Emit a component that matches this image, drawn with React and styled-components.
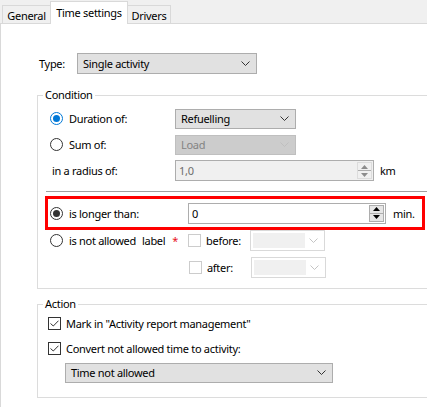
import React from "react"
import styled, { createGlobalStyle, css } from "styled-components"

const GlobalStyle = createGlobalStyle`
  html, body {
    margin: 0;
    padding: 0;
    background: #ffffff;
  }
  body {
    font-family: "Noto Sans", "Open Sans", sans-serif;
    font-size: 11px;
    letter-spacing: -0.3px;
    color: #000;
  }
`

const Window = styled.div`
  width: 427px;
  height: 407px;
  overflow: hidden;
  display: flex;
  flex-direction: column;
  background: #f0f0f0;
`

const TabBar = styled.div`
  height: 23px;
  display: flex;
  align-items: flex-end;
  padding-left: 2px;
  border-bottom: 1px solid #d9d9d9;
  flex-shrink: 0;
`

const Tab = styled.div`
  height: 18px;
  width: ${(p) => p.$w}px;
  box-sizing: border-box;
  display: flex;
  align-items: center;
  justify-content: center;
  border: 1px solid #d9d9d9;
  border-bottom: none;
  background: #f0f0f0;
  margin-right: -1px;
  padding-top: 1px;
  ${(p) =>
    p.$active &&
    css`
      height: 23px;
      background: #fff;
      margin-bottom: -1px;
      position: relative;
      z-index: 1;
      align-items: flex-start;
      padding-top: 3px;
    `}
`

const Panel = styled.div`
  flex: 1;
  background: #fff;
  border-left: 1px solid #d9d9d9;
  padding: 29px 0 0 36px;
  display: flex;
  flex-direction: column;
`

const TypeRow = styled.div`
  display: flex;
  align-items: center;
  height: 21px;
  padding-left: 2px;
`

const TypeLabel = styled.span`
  width: 38px;
`

const Group = styled.fieldset`
  margin: ${(p) => p.$top || 0}px -20px 0 0;
  padding: 0;
  border: 1px solid #dcdcdc;
  min-width: 0;
  height: ${(p) => p.$height}px;
  box-sizing: border-box;
`

const Legend = styled.legend`
  margin-left: 5px;
  padding: 0 2px;
  line-height: 14px;
`

const Rows = styled.div`
  display: flex;
  flex-direction: column;
  padding: ${(p) => p.$pad || "0"};
`

const Row = styled.div`
  display: flex;
  align-items: center;
  height: ${(p) => p.$h || 21}px;
  margin-top: ${(p) => p.$mt || 0}px;
  white-space: nowrap;
`

const Choice = styled.label`
  display: flex;
  align-items: center;
  gap: 6px;
  width: ${(p) => p.$w}px;
  flex-shrink: 0;
  white-space: nowrap;
`

const Radio = styled.span`
  width: 13px;
  height: 13px;
  box-sizing: border-box;
  border-radius: 50%;
  border: 1px solid ${(p) => (p.$color ? p.$color : "#333")};
  display: flex;
  align-items: center;
  justify-content: center;
  flex-shrink: 0;
  &::after {
    content: "";
    display: ${(p) => (p.$checked ? "block" : "none")};
    width: 7px;
    height: 7px;
    border-radius: 50%;
    background: ${(p) => (p.$color ? p.$color : "#333")};
  }
`

const Box = styled.span`
  width: 13px;
  height: 13px;
  box-sizing: border-box;
  border: 1px solid ${(p) => (p.$disabled ? "#cccccc" : "#333")};
  display: flex;
  align-items: center;
  justify-content: center;
  flex-shrink: 0;
  background: #fff;
`

const Check = ({ checked, disabled }) => (
  <Box $disabled={disabled}>
    {checked && (
      <svg width="9" height="7" viewBox="0 0 9 7">
        <path d="M0.5 3.5 L3.3 6 L8.5 0.7" fill="none" stroke="#333" strokeWidth="1" />
      </svg>
    )}
  </Box>
)

const SelectBox = styled.div`
  width: ${(p) => p.$w}px;
  height: ${(p) => p.$h || 21}px;
  box-sizing: border-box;
  border: 1px solid #adadad;
  background: #e1e1e1;
  display: flex;
  align-items: center;
  justify-content: space-between;
  padding: 0 6px 0 5px;
  flex-shrink: 0;
  ${(p) =>
    p.$disabled &&
    css`
      background: #cccccc;
      border-color: #bfbfbf;
      color: #838383;
    `}
  ${(p) =>
    p.$empty &&
    css`
      background: #fff;
      border-color: #d9d9d9;
      padding: 2px 6px 2px 2px;
    `}
`

const EmptyFill = styled.span`
  width: 52px;
  height: 100%;
  background: #f0f0f0;
`

const Chevron = ({ color = "#333" }) => (
  <svg width="9" height="5" viewBox="0 0 9 5">
    <path d="M0.5 0.5 L4.5 4.5 L8.5 0.5" fill="none" stroke={color} strokeWidth="1" />
  </svg>
)

const Select = ({ w, h, disabled, empty, children }) => (
  <SelectBox $w={w} $h={h} $disabled={disabled} $empty={empty}>
    {empty ? <EmptyFill /> : <span>{children}</span>}
    <Chevron color={disabled ? "#bfbfbf" : empty ? "#c4c4c4" : "#333"} />
  </SelectBox>
)

const SpinBox = styled.div`
  width: ${(p) => p.$w}px;
  height: 21px;
  box-sizing: border-box;
  border: 1px solid #adadad;
  background: ${(p) => (p.$disabled ? "#f0f0f0" : "#fff")};
  color: ${(p) => (p.$disabled ? "#6d6d6d" : "#000")};
  display: flex;
  align-items: center;
  justify-content: space-between;
  padding: 0 1px 0 3px;
  flex-shrink: 0;
`

const SpinButtons = styled.div`
  width: 15px;
  height: 17px;
  display: flex;
  flex-direction: column;
  border: 1px solid ${(p) => (p.$disabled ? "#dcdcdc" : "#adadad")};
  box-sizing: border-box;
  background: ${(p) => (p.$disabled ? "#f0f0f0" : "#e6e6e6")};
`

const SpinHalf = styled.div`
  flex: 1;
  display: flex;
  align-items: center;
  justify-content: center;
  & + & {
    border-top: 1px solid ${(p) => (p.$disabled ? "#dcdcdc" : "#adadad")};
  }
`

const Tri = ({ up, color }) => (
  <svg width="7" height="4" viewBox="0 0 7 4">
    <path d={up ? "M0 4 L3.5 0 L7 4 Z" : "M0 0 L3.5 4 L7 0 Z"} fill={color} />
  </svg>
)

const Spin = ({ w, disabled, value }) => {
  const c = disabled ? "#8c8c8c" : "#000"
  return (
    <SpinBox $w={w} $disabled={disabled}>
      <span>{value}</span>
      <SpinButtons $disabled={disabled}>
        <SpinHalf $disabled={disabled}>
          <Tri up color={c} />
        </SpinHalf>
        <SpinHalf $disabled={disabled}>
          <Tri color={c} />
        </SpinHalf>
      </SpinButtons>
    </SpinBox>
  )
}

const Unit = styled.span`
  margin-left: ${(p) => p.$ml || 6}px;
`

const Separator = styled.div`
  height: 1px;
  background: #a0a0a0;
  margin: 10px 0 0 8px;
`

const Highlight = styled.div`
  margin: 4px 0 0 7px;
  width: 380px;
  height: 34px;
  box-sizing: border-box;
  border: 3px solid #ff0000;
  display: flex;
  align-items: center;
  padding-left: 2px;
  white-space: nowrap;
`

const Tag = styled.span`
  margin-left: ${(p) => p.$ml || 0}px;
  color: ${(p) => p.$color || "inherit"};
`

const CheckLabel = styled.label`
  display: flex;
  align-items: center;
  gap: 5px;
  width: ${(p) => (p.$w ? `${p.$w}px` : "auto")};
  margin-left: ${(p) => p.$ml || 0}px;
  flex-shrink: 0;
`

export default function App() {
  return (
    <>
      <GlobalStyle />
      <Window>
        <TabBar>
          <Tab $w={49}>General</Tab>
          <Tab $w={78} $active>Time settings</Tab>
          <Tab $w={44}>Drivers</Tab>
        </TabBar>
        <Panel>
          <TypeRow>
            <TypeLabel>Type:</TypeLabel>
            <Select w={180}>Single activity</Select>
          </TypeRow>

          <Group $top={14} $height={201}>
            <Legend>Condition</Legend>
            <Rows $pad="6px 0 0 12px">
              <Row>
                <Choice $w={125}>
                  <Radio $checked $color="#0078d7" />
                  Duration of:
                </Choice>
                <Select w={121} h={20}>Refuelling</Select>
              </Row>
              <Row $mt={5}>
                <Choice $w={125}>
                  <Radio />
                  Sum of:
                </Choice>
                <Select w={121} h={20} disabled>
                  Load
                </Select>
              </Row>
              <Row $mt={5}>
                <Choice $w={125}>
                  <span style={{ marginLeft: 2 }}>in a radius of:</span>
                </Choice>
                <Spin w={199} disabled value="1,0" />
                <Unit>km</Unit>
              </Row>
            </Rows>
            <Separator />
            <Highlight>
              <Choice $w={138}>
                <Radio $checked />
                is longer than:
              </Choice>
              <Spin w={198} value="0" />
              <Unit $ml={7}>min.</Unit>
            </Highlight>
            <Rows $pad="0 0 0 12px">
              <Row $mt={0} $h={21}>
                <Choice $w={92}>
                  <Radio />
                  is not allowed
                </Choice>
                <Tag>label</Tag>
                <Tag $ml={7} $color="#e81123">*</Tag>
                <CheckLabel $ml={10} $w={62}>
                  <Check disabled />
                  before:
                </CheckLabel>
                <Select w={75} empty />
              </Row>
              <Row $mt={6} $h={21}>
                <Choice $w={139} />
                <CheckLabel $w={62}>
                  <Check disabled />
                  after:
                </CheckLabel>
                <Select w={75} empty />
              </Row>
            </Rows>
          </Group>

          <Group $top={8} $height={101}>
            <Legend>Action</Legend>
            <Rows $pad="4px 0 0 10px">
              <Row $h={16}>
                <CheckLabel>
                  <Check checked />
                  Mark in "Activity report management"
                </CheckLabel>
              </Row>
              <Row $h={16} $mt={9}>
                <CheckLabel>
                  <Check checked />
                  Convert not allowed time to activity:
                </CheckLabel>
              </Row>
              <Row $mt={6} style={{ paddingLeft: 17 }}>
                <Select w={268} h={20}>Time not allowed</Select>
              </Row>
            </Rows>
          </Group>
        </Panel>
      </Window>
    </>
  )
}
